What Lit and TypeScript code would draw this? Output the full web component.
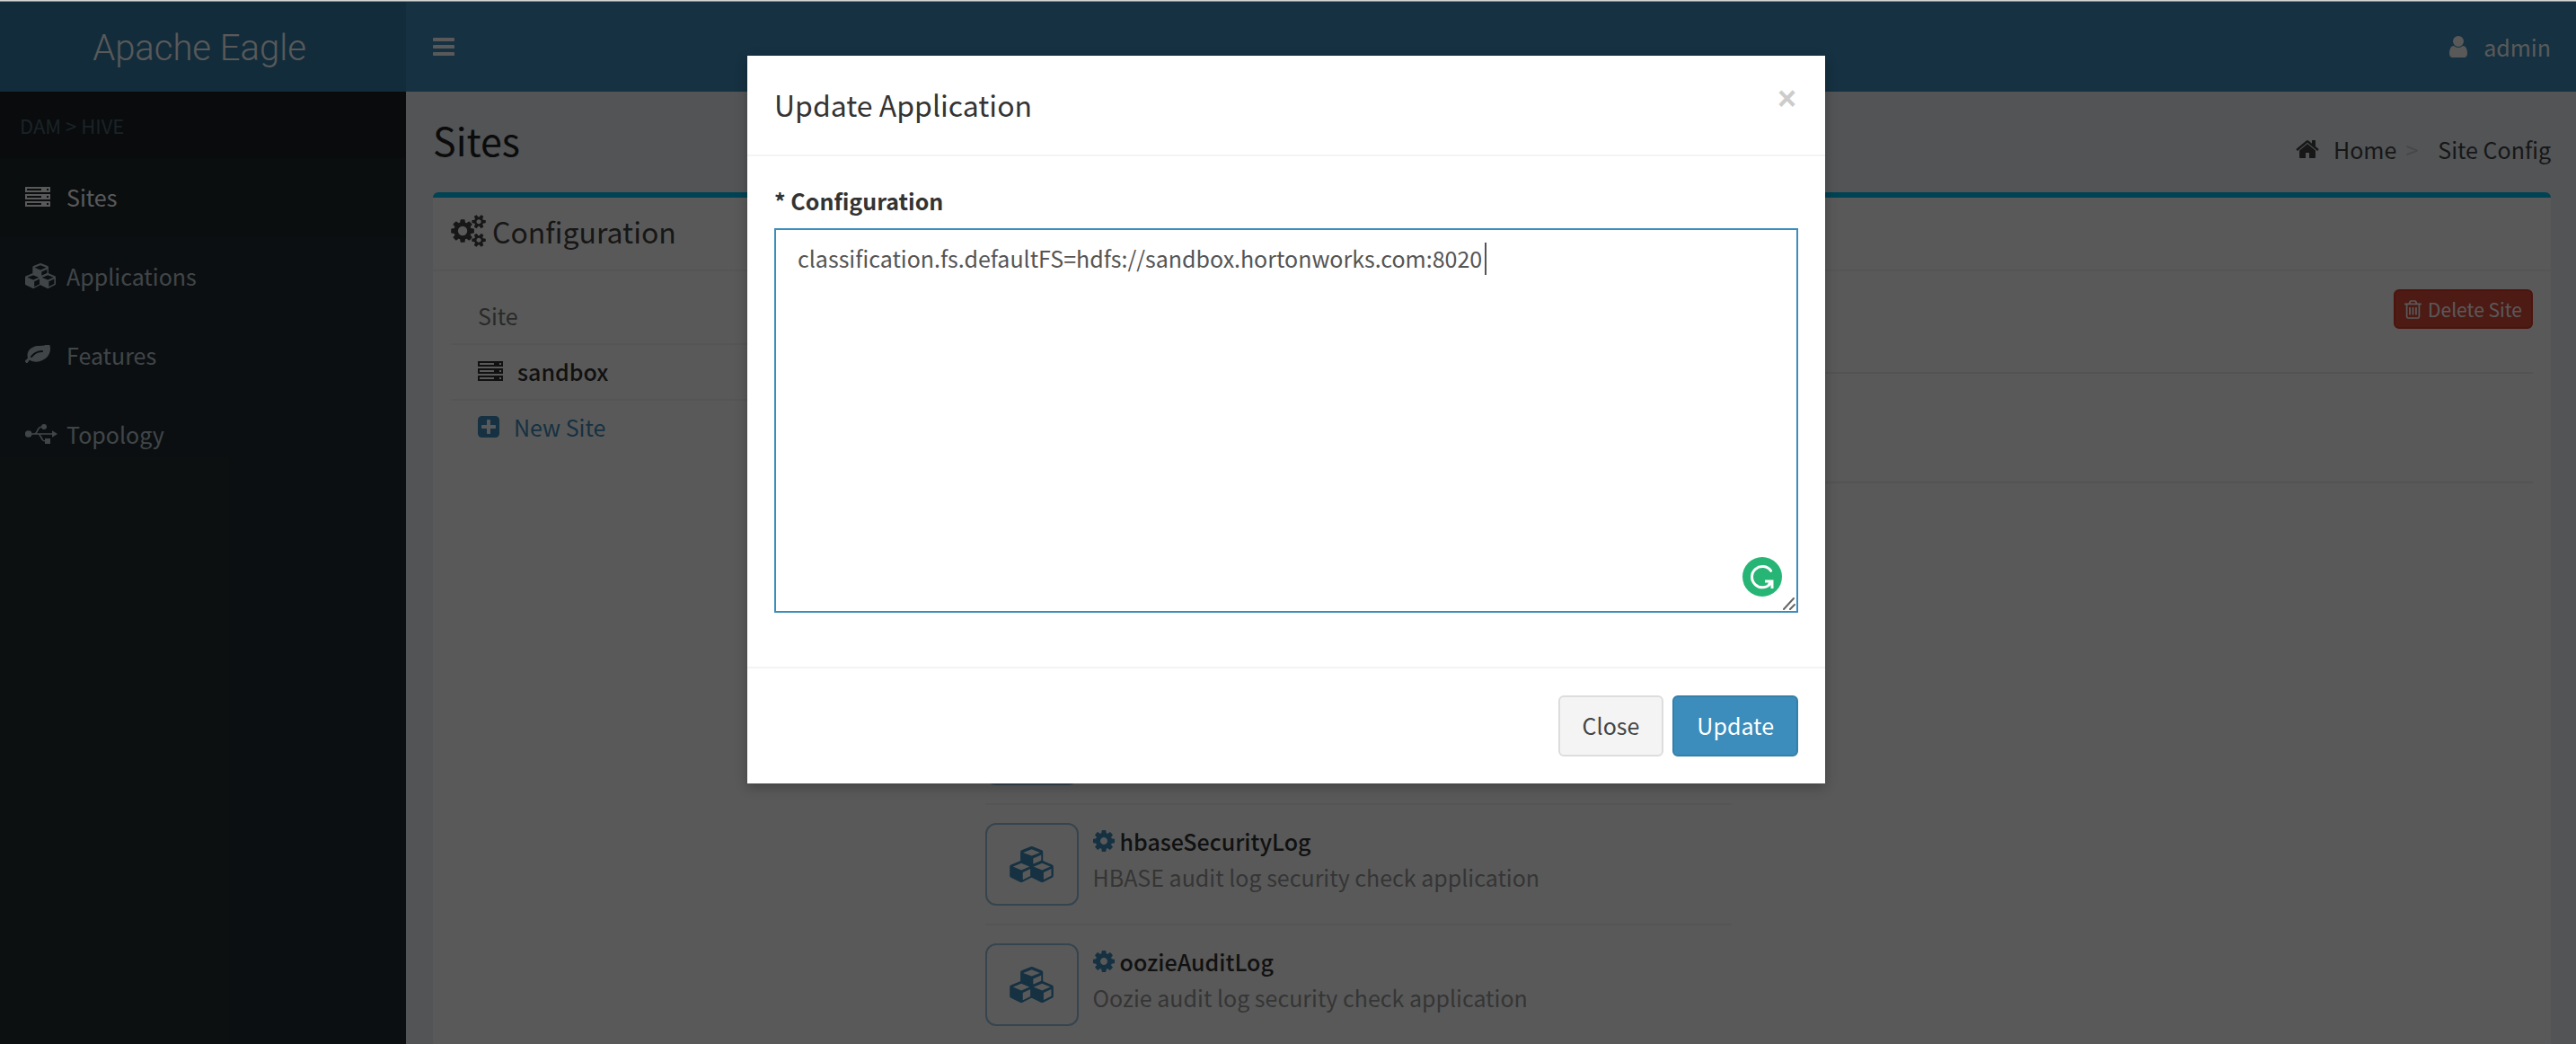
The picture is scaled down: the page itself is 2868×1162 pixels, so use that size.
import { LitElement, html, css, svg } from "lit";
import { customElement } from "lit/decorators.js";

const glyphs: Record<string, { box: string; body: unknown }> = {
  bars: {
    box: "128 256 1536 1280",
    body: svg`<path d="M1664 1344v128q0 26-19 45t-45 19h-1408q-26 0-45-19t-19-45v-128q0-26 19-45t45-19h1408q26 0 45 19t19 45zm0-512v128q0 26-19 45t-45 19h-1408q-26 0-45-19t-19-45v-128q0-26 19-45t45-19h1408q26 0 45 19t19 45zm0-512v128q0 26-19 45t-45 19h-1408q-26 0-45-19t-19-45v-128q0-26 19-45t45-19h1408q26 0 45 19t19 45z"/>`,
  },
  user: {
    box: "256 128 1280 1536",
    body: svg`<path d="M1536 1399q0 109-62.5 187t-150.5 78h-854q-88 0-150.5-78t-62.5-187q0-85 8.5-160.5t31.5-152 58.5-131 94-89 134.5-34.5q131 128 313 128t313-128q76 0 134.5 34.5t94 89 58.5 131 31.5 152 8.5 160.5zm-256-887q0 159-112.5 271.5t-271.5 112.5-271.5-112.5-112.5-271.5 112.5-271.5 271.5-112.5 271.5 112.5 112.5 271.5z"/>`,
  },
  home: {
    box: "89 248 1614 1288",
    body: svg`<path d="M1472 992v480q0 26-19 45t-45 19h-384v-384h-256v384h-384q-26 0-45-19t-19-45v-480q0-1 .5-3t.5-3l575-474 575 474q1 2 1 6zm223-69l-62 74q-8 9-21 11h-3q-13 0-21-7l-692-577-692 577q-12 8-24 7-13-2-21-11l-62-74q-8-10-7-23.5t11-21.5l719-599q32-26 76-26t76 26l244 204v-195q0-14 9-23t23-9h192q14 0 23 9t9 23v408l219 182q10 8 11 21.5t-7 23.5z"/>`,
  },
  server: {
    box: "0 0 28 22",
    body: svg`<path fill-rule="evenodd" d="M0 0h28v6H0zM2 2h16v2H2zM24 2h2v2h-2zM0 8h28v6H0zM2 10h16v2H2zM24 10h2v2h-2zM0 16h28v6H0zM2 18h16v2H2zM24 18h2v2h-2z"/>`,
  },
  cubes: {
    box: "0 0 147 121",
    body: svg`<path fill-rule="evenodd" d="M74 0q2 0 4 1l30 12q4 2 4 6v32q0 3-4 5l-30 13q-4 2-8 0l-30-13q-4-2-4-5V19q0-4 4-6L70 1q2-1 4-1zM74 10 45 21l29 11 28-11zM79 41v19l27-12V29z"/><path fill-rule="evenodd" d="M39 48q2 0 4 1l31 13q4 2 4 6v31q0 3-4 5l-31 16q-4 2-8 0L4 105q-4-2-4-6V68q0-4 4-6l31-13q2-1 4-1zM39 57 11 68l28 12 28-12zM44 88v25l26-13V76z"/><path fill-rule="evenodd" d="M109 48q2 0 4 1l30 13q4 2 4 6v31q0 4-4 6l-30 15q-4 2-8 0l-31-15q-4-2-4-6V68q0-4 4-6l31-13q2-1 4-1zM109 57 80 68l29 12 28-12zM114 88v24l26-13V76z"/>`,
  },
  leaf: {
    box: "0 256 1792 1408",
    body: svg`<path d="M1280 704q0-26-19-45t-45-19q-172 0-318 49.5t-259.5 134-235.5 219.5q-19 21-19 45 0 26 19 45t45 19q24 0 45-19 27-24 74-71t67-66q137-124 268.5-176t313.5-52q26 0 45-19t19-45zm512-198q0 95-20 193-46 224-184.5 383t-357.5 268q-214 108-438 108-148 0-286-47-15-5-88-42t-96-37q-16 0-39.5 32t-45 70-52.5 70-60 32q-43 0-63.5-17.5t-45.5-59.5q-2-4-6-11t-5.5-10-3-9.5-1.5-13.5q0-35 31-73.5t68-65.5 68-56 31-48q0-4-14-38t-16-44q-9-51-9-104 0-115 43.5-220t119-184.5 170.5-139 204-95.5q55-18 145-25.5t179.5-9 178.5-6 163.5-24 113.5-56.5l29.5-29.5 29.5-28 27-20 36.5-16 43.5-4.5q39 0 70.5 46t47.5 112 24 124 8 96z"/>`,
  },
  usb: {
    box: "0 0 108 66",
    body: svg`<circle cx="11" cy="33" r="11.500"/><circle cx="63" cy="9" r="9"/><path d="M90 22l18 11-18 11zM66 48h18v18H66z"/><path d="M14 33H94M30 33q6 0 10-9l4-8q4-7 12-7h7M44 33q4 0 8 9l5 9q3 6 11 6h4" fill="none" stroke="currentColor" stroke-width="5"/>`,
  },
  cogs: {
    box: "-64 0 1920 1792",
    body: svg`<path d="M832 896q0-106-75-181t-181-75-181 75-75 181 75 181 181 75 181-75 75-181zm768 512q0-52-38-90t-90-38-90 38-38 90q0 53 37.5 90.5t90.500 37.500 90.500-37.500 37.500-90.500zm0-1024q0-52-38-90t-90-38-90 38-38 90q0 53 37.500 90.500t90.500 37.500 90.500-37.500 37.500-90.500zm-384 421v185q0 10-7 19.500t-16 10.500l-155 24q-11 35-32 76 34 48 90 115 7 11 7 20 0 12-7 19-23 30-82.500 89.500t-78.500 59.500q-11 0-21-7l-115-90q-37 19-77 31-11 108-23 155-7 24-30 24h-186q-11 0-20-7.500t-10-17.500l-23-153q-34-10-75-31l-118 89q-7 7-20 7-11 0-21-8-144-133-144-160 0-9 7-19 10-14 41-53t47-61q-23-44-35-82l-152-24q-10-1-17-9.500t-7-19.500v-185q0-10 7-19.500t16-10.500l155-24q11-35 32-76-34-48-90-115-7-11-7-20 0-12 7-20 22-30 82-89t79-59q11 0 21 7l115 90q34-18 77-32 11-108 23-154 7-24 30-24h186q11 0 20 7.500t10 17.500l23 153q34 10 75 31l118-89q8-7 20-7 11 0 21 8 144 133 144 160 0 8-7 19-12 16-42 54t-45 60q23 48 34 82l152 23q10 2 17 10.500t7 19.500zm640 533v140q0 16-149 31-12 27-30 52 51 113 51 138 0 4-4 7-122 71-124 71-8 0-46-47t-52-68q-20 2-30 2t-30-2q-14 21-52 68t-46 47q-2 0-124-71-4-3-4-7 0-25 51-138-18-25-30-52-149-15-149-31v-140q0-16 149-31 13-29 30-52-51-113-51-138 0-4 4-7 4-2 35-20t59-34 30-16q8 0 46 46.500t52 67.500q20-2 30-2t30 2q51-71 92-112l6-2q4 0 124 70 4 3 4 7 0 25-51 138 17 23 30 52 149 15 149 31zm0-1024v140q0 16-149 31-12 27-30 52 51 113 51 138 0 4-4 7-122 71-124 71-8 0-46-47t-52-68q-20 2-30 2t-30-2q-14 21-52 68t-46 47q-2 0-124-71-4-3-4-7 0-25 51-138-18-25-30-52-149-15-149-31v-140q0-16 149-31 13-29 30-52-51-113-51-138 0-4 4-7 4-2 35-20t59-34 30-16q8 0 46 46.500t52 67.500q20-2 30-2t30 2q51-71 92-112l6-2q4 0 124 70 4 3 4 7 0 25-51 138 17 23 30 52 149 15 149 31z"/>`,
  },
  cog: {
    box: "128 128 1536 1536",
    body: svg`<path d="M1152 896q0-106-75-181t-181-75-181 75-75 181 75 181 181 75 181-75 75-181zm512-109v222q0 12-8 23t-20 13l-185 28q-19 54-39 91 35 50 107 138 10 12 10 25t-9 23q-27 37-99 108t-94 71q-12 0-26-9l-138-108q-44 23-91 38-16 136-29 186-7 28-36 28h-222q-14 0-24.500-8.500t-11.500-21.500l-28-184q-49-16-90-37l-141 107q-10 9-25 9-14 0-25-11-126-114-165-168-7-10-7-23 0-12 8-23 15-21 51-66.500t54-70.500q-27-50-41-99l-183-27q-13-2-21-12.500t-8-23.500v-222q0-12 8-23t19-13l186-28q14-46 39-92-40-57-107-138-10-12-10-24 0-10 9-23 26-36 98.500-107.500t94.500-71.500q13 0 26 10l138 107q44-23 91-38 16-136 29-186 7-28 36-28h222q14 0 24.500 8.500t11.500 21.500l28 184q49 16 90 37l142-107q9-9 24-9 13 0 25 10 129 119 165 170 7 8 7 22 0 12-8 23-15 21-51 66.500t-54 70.500q26 50 41 98l183 28q13 2 21 12.500t8 23.500z"/>`,
  },
  plus: {
    box: "128 128 1536 1536",
    body: svg`<path d="M1408 960v-128q0-26-19-45t-45-19h-320v-320q0-26-19-45t-45-19h-128q-26 0-45 19t-19 45v320h-320q-26 0-45 19t-19 45v128q0 26 19 45t45 19h320v320q0 26 19 45t45 19h128q26 0 45-19t19-45v-320h320q26 0 45-19t19-45zm256-544v960q0 119-84.500 203.500t-203.500 84.500h-960q-119 0-203.500-84.500t-84.500-203.500v-960q0-119 84.500-203.500t203.500-84.500h960q119 0 203.500 84.500t84.500 203.500z"/>`,
  },
  trash: {
    box: "192 128 1408 1536",
    body: svg`<path d="M704 736v576q0 14-9 23t-23 9h-64q-14 0-23-9t-9-23v-576q0-14 9-23t23-9h64q14 0 23 9t9 23zm256 0v576q0 14-9 23t-23 9h-64q-14 0-23-9t-9-23v-576q0-14 9-23t23-9h64q14 0 23 9t9 23zm256 0v576q0 14-9 23t-23 9h-64q-14 0-23-9t-9-23v-576q0-14 9-23t23-9h64q14 0 23 9t9 23zm128 724v-948h-896v948q0 22 7 40.500t14.500 27 10.500 8.500h832q3 0 10.500-8.500t14.500-27 7-40.500zm-672-1076h448l-48-117q-7-9-17-11h-317q-10 2-17 11zm928 32v64q0 14-9 23t-23 9h-96v948q0 83-47 143.500t-113 60.500h-832q-66 0-113-58.500t-47-141.500v-952h-96q-14 0-23-9t-9-23v-64q0-14 9-23t23-9h309l70-167q15-37 54-63t79-26h320q40 0 79 26t54 63l70 167h309q14 0 23 9t9 23z"/>`,
  },
};

const icon = (name: string, size = "") => html`
  <svg class="icon ${size} icon-${name}" viewBox=${glyphs[name].box} aria-hidden="true">${glyphs[name].body}</svg>
`;

const menu = [
  { icon: "server", label: "Sites", active: true },
  { icon: "cubes", label: "Applications", active: false },
  { icon: "leaf", label: "Features", active: false },
  { icon: "usb", label: "Topology", active: false },
];

const applications = [
  { name: "", description: "" },
  { name: "hbaseSecurityLog", description: "HBASE audit log security check application" },
  { name: "oozieAuditLog", description: "Oozie audit log security check application" },
];

@customElement("app-root")
export class AppRoot extends LitElement {
  static styles = css`
    :host {
      display: flex;
      flex-direction: column;
      min-height: 100vh;
      position: relative;
      font-family: "Noto Sans CJK SC", "Open Sans", sans-serif;
      font-size: 25px;
      line-height: 40px;
      color: #333;
      background: #ecf0f5;
    }
    *, *::before, *::after { box-sizing: border-box; }
    h1, h2, h3, p, ul, ol { margin: 0; padding: 0; font-weight: 400; }
    ul, ol { list-style: none; }
    a { color: inherit; text-decoration: none; }
    button, textarea { font: inherit; margin: 0; }
    .icon { display: block; flex: none; fill: currentColor; height: 24px; }
    .icon-bars { width: 24px; height: 20px; }
    .icon-user { width: 22px; }
    .icon-home { width: 26px; height: 20px; }
    .icon-server { width: 28px; height: 22px; }
    .icon-cubes { width: 34px; height: 28px; }
    .icon-leaf { width: 28px; height: 22px; }
    .icon-usb { width: 36px; height: 22px; }
    .icon-cogs { width: 39px; height: 36px; }
    .icon-cog, .icon-plus { width: 24px; }
    .icon-trash { width: 19px; height: 21px; }
    .large { width: 49px; height: 40px; }

    .edge { height: 2px; background: #d4d4d4; border-bottom: 1px solid #7d8a8d; }
    .topbar { display: flex; height: 100px; background: #3c8dbc; color: #fff; }
    .logo {
      flex: none; width: 452px; padding: 3px 8px 0 0;
      display: flex; align-items: center; justify-content: center;
      background: #367fa9;
      font-family: Roboto, "Liberation Sans", sans-serif; font-weight: 300; font-size: 40px;
    }
    .navbar { flex: 1; display: flex; align-items: center; justify-content: space-between; padding: 0 28px 0 0; }
    .toggle { padding: 30px; border: 0; background: none; color: inherit; }
    .account { display: flex; align-items: center; gap: 17px; }

    .frame { flex: 1; display: flex; }
    .sidebar { flex: none; width: 452px; background: #222d32; color: #b8c7ce; }
    .scope { padding: 20px 22px; line-height: 34px; font-size: 22px; background: #1a2226; color: #4b646f; }
    .menu-link { display: flex; align-items: center; padding: 23px 28px 25px; }
    .menu-icon { width: 46px; }
    .active { background: #1e282c; color: #fff; }

    .content { flex: 1; min-width: 0; display: flex; flex-direction: column; padding: 0 28px 0 30px; }
    .heading { display: flex; justify-content: space-between; align-items: flex-start; height: 112px; }
    .title { font-size: 43px; line-height: 48px; padding-top: 29px; color: #222; }
    .crumbs { display: flex; padding-top: 44px; color: #444; }
    .crumb { display: flex; align-items: center; gap: 16px; }
    .crumb + .crumb::before { content: ">"; color: #ccc; padding-left: 10px; margin-right: 6px; }

    .box { flex: 1; background: #fff; border-top: 6px solid #00c0ef; border-radius: 6px 6px 0 0; color: #444; }
    .box-header { display: flex; align-items: center; gap: 7px; padding: 19px 20px 25px; border-bottom: 2px solid #f4f4f4; }
    .box-title { font-size: 32px; line-height: 36px; }
    .box-body { display: grid; grid-template-columns: repeat(12, minmax(0, 1fr)); column-gap: 60px; padding: 20px 20px 0; }
    .sites { grid-column: span 3; }
    .row { display: flex; align-items: center; padding: 9px 30px 11px; }
    .sites li + li { border-top: 2px solid #f4f4f4; }
    .caption { color: #777; }
    .current { gap: 16px; font-weight: 500; color: #333; }
    .create { gap: 16px; color: #3c8dbc; }

    .detail { grid-column: span 9; }
    .toolbar { display: flex; justify-content: flex-end; padding-bottom: 48px; border-bottom: 2px solid #eee; }
    .delete {
      display: flex; align-items: center; gap: 7px; height: 44px; padding: 0 10px;
      border: 2px solid #d73925; border-radius: 6px; background: #dd4b39; color: #fff;
      font-size: 21px; line-height: 36px;
    }
    .summary { height: 122px; border-bottom: 2px solid #eee; }
    .columns { display: grid; grid-template-columns: repeat(2, minmax(0, 1fr)); gap: 60px; padding-top: 224px; }
    .app { display: flex; gap: 16px; padding: 20px 0; }
    .app + .app { border-top: 2px solid #f4f4f4; }
    .app-icon {
      flex: none; display: grid; place-items: center; width: 104px; height: 92px; padding: 0;
      border: 2px solid #98c4de; border-radius: 12px; background: none; color: #3c8dbc;
    }
    .app-name { display: flex; align-items: center; gap: 6px; font-size: 25px; font-weight: 500; color: #333; }
    .app-name .icon { color: #3c8dbc; }
    .app-about { color: #999; }

    .overlay {
      position: absolute; inset: 2px 0 0; padding: 60px 4px 0 0;
      display: flex; justify-content: center; align-items: flex-start;
      background: rgba(0, 0, 0, 0.65);
    }
    .dialog { width: 1200px; background: #fff; box-shadow: 0 4px 12px rgba(0, 0, 0, 0.25); }
    .dialog-head {
      display: flex; justify-content: space-between; align-items: flex-start;
      height: 112px; padding: 30px; border-bottom: 2px solid #f4f4f4;
    }
    .dialog-title { font-size: 32px; line-height: 48px; color: #333; }
    .dismiss {
      padding: 2px; border: 0; background: none; color: #ccc;
      font-family: "Liberation Sans", sans-serif; font-weight: 700; font-size: 36px; line-height: 32px;
    }
    .dialog-body { padding: 29px 30px 60px; }
    .label { display: block; margin-bottom: 11px; font-weight: 700; color: #333; }
    .field { position: relative; display: block; }
    .editor {
      display: block; width: 100%; height: 428px; padding: 11px 24px; resize: none; outline: 0;
      border: 2px solid #3c8dbc; border-radius: 0; background: #fff; color: #555; caret-color: transparent;
    }
    .caret { position: absolute; left: 791px; top: 16px; width: 2px; height: 36px; background: #555; }
    .marks { position: absolute; right: 3px; bottom: 3px; width: 14px; height: 14px; }
    .checker { position: absolute; right: 18px; bottom: 18px; width: 44px; height: 44px; }
    .dialog-foot { display: flex; justify-content: flex-end; gap: 10px; padding: 30px; border-top: 2px solid #f4f4f4; }
    .btn { height: 68px; padding: 0 25px 2px; border: 2px solid #ddd; border-radius: 6px; background: #f4f4f4; color: #444; }
    .primary { border-color: #367fa9; background: #3c8dbc; color: #fff; }
  `;

  firstUpdated() {
    const editor = this.renderRoot.querySelector("textarea");
    editor?.focus();
    editor?.setSelectionRange(editor.value.length, editor.value.length);
  }

  render() {
    return html`
      <div class="edge"></div>
      <header class="topbar">
        <a class="logo" href="#">Apache Eagle</a>
        <nav class="navbar">
          <button class="toggle" aria-label="Toggle navigation">${icon("bars")}</button>
          <a class="account" href="#">${icon("user")}<span>admin</span></a>
        </nav>
      </header>
      <div class="frame">
        <aside class="sidebar">
          <div class="scope">DAM &gt; HIVE</div>
          <ul>
            ${menu.map((m) => html`
              <li><a class="menu-link ${m.active ? "active" : ""}" href="#"><span class="menu-icon">${icon(m.icon)}</span>${m.label}</a></li>
            `)}
          </ul>
        </aside>
        <main class="content">
          <div class="heading">
            <h1 class="title">Sites</h1>
            <ol class="crumbs">
              <li class="crumb"><a class="crumb" href="#">${icon("home")}Home</a></li>
              <li class="crumb">Site Config</li>
            </ol>
          </div>
          <section class="box">
            <div class="box-header">${icon("cogs")}<h2 class="box-title">Configuration</h2></div>
            <div class="box-body">
              <ul class="sites">
                <li><span class="row caption">Site</span></li>
                <li><a class="row current" href="#">${icon("server")}sandbox</a></li>
                <li><a class="row create" href="#">${icon("plus")}New Site</a></li>
              </ul>
              <div class="detail">
                <div class="toolbar"><button class="delete">${icon("trash")}Delete Site</button></div>
                <div class="summary"></div>
                <div class="columns">
                  <ul>
                    ${applications.map((a) => html`
                      <li class="app">
                        <button class="app-icon" aria-label="Edit application">${icon("cubes", "large")}</button>
                        ${a.name ? html`<div>
                          <h3 class="app-name">${icon("cog")}${a.name}</h3>
                          <p class="app-about">${a.description}</p>
                        </div>` : ""}
                      </li>
                    `)}
                  </ul>
                </div>
              </div>
            </div>
          </section>
        </main>
      </div>
      <div class="overlay">
        <div class="dialog" role="dialog" aria-labelledby="dialog-title">
          <div class="dialog-head">
            <h2 class="dialog-title" id="dialog-title">Update Application</h2>
            <button class="dismiss" aria-label="Close dialog">×</button>
          </div>
          <div class="dialog-body">
            <label class="label" for="configuration">* Configuration</label>
            <div class="field">
              <textarea class="editor" id="configuration" spellcheck="false" .value=${"classification.fs.defaultFS=hdfs://sandbox.hortonworks.com:8020"}></textarea>
              <span class="caret"></span>
              <svg class="marks" viewBox="0 0 14 14" aria-hidden="true"><path d="M1 13L12 1M8 13l5-5" fill="none" stroke="#666" stroke-width="2" stroke-linecap="round"/></svg>
              <svg class="checker" viewBox="0 0 132 132" aria-hidden="true">
                <circle cx="66" cy="66" r="66" fill="#27b575"/>
                <path d="M95 46A35 35 0 1 0 94 88" fill="none" stroke="#fff" stroke-width="9" stroke-linecap="round"/>
                <path d="M75 81h24v24M98 82 86 94" fill="none" stroke="#fff" stroke-width="9"/>
              </svg>
            </div>
          </div>
          <div class="dialog-foot">
            <button class="btn">Close</button>
            <button class="btn primary">Update</button>
          </div>
        </div>
      </div>
    `;
  }
}
